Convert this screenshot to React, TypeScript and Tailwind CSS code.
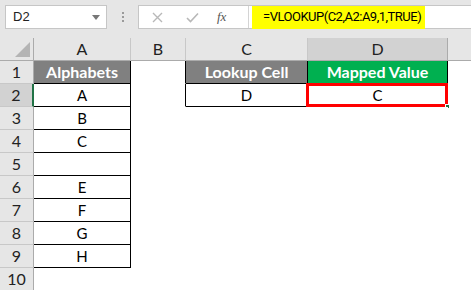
import React from "react";

const font = "font-['Lato','Liberation_Sans',sans-serif]";

// column widths incl. their right border line
const cols = "grid-cols-[34px_97px_55px_122px_140px_1fr]";

type Cell = {
  text?: string;
  bg?: string;
  bold?: boolean;
  right?: boolean; // black right border
  bottom?: boolean; // black bottom border
  selected?: boolean;
};

const rows: Cell[][] = [
  [
    { text: "Alphabets", bg: "bg-[#808080]", bold: true, right: true, bottom: true },
    { right: true },
    { text: "Lookup Cell", bg: "bg-[#808080]", bold: true, right: true, bottom: true },
    { text: "Mapped Value", bg: "bg-[#00b050]", bold: true, right: true, bottom: true },
  ],
  [
    { text: "A", right: true, bottom: true },
    { right: true },
    { text: "D", right: true, bottom: true },
    { text: "C", right: true, bottom: true, selected: true },
  ],
  [{ text: "B", right: true, bottom: true }, {}, {}, {}],
  [{ text: "C", right: true, bottom: true }, {}, {}, {}],
  [{ text: "", right: true, bottom: true }, {}, {}, {}],
  [{ text: "E", right: true, bottom: true }, {}, {}, {}],
  [{ text: "F", right: true, bottom: true }, {}, {}, {}],
  [{ text: "G", right: true, bottom: true }, {}, {}, {}],
  [{ text: "H", right: true, bottom: true }, {}, {}, {}],
  [{}, {}, {}, {}],
];

function Toolbar() {
  return (
    <div className="h-[38px] bg-[#e6e6e6] flex items-start pt-[5px] pl-[5px]">
      {/* name box */}
      <div className="w-[102px] h-[24px] bg-white border border-[#c6c6c6] flex items-center justify-between pl-[7px] pr-[6px]">
        <span className="text-[13px] text-[#222] font-['Liberation_Sans',sans-serif]">D2</span>
        <svg width="8" height="5" viewBox="0 0 8 5">
          <path d="M0 0 L8 0 L4 5 Z" fill="#777" />
        </svg>
      </div>
      {/* dots */}
      <div className="w-[31px] h-[24px] flex flex-col items-center justify-center gap-[2px]">
        <span className="w-[2px] h-[2px] bg-[#9a9a9a]" />
        <span className="w-[2px] h-[2px] bg-[#9a9a9a]" />
        <span className="w-[2px] h-[2px] bg-[#9a9a9a]" />
      </div>
      {/* formula bar */}
      <div className="flex-1 h-[24px] bg-white border border-[#c6c6c6] border-r-0 flex items-center">
        <div className="w-[110px] h-full flex items-center border-r border-[#d4d4d4]">
          <svg className="ml-[13px]" width="11" height="11" viewBox="0 0 11 11">
            <path d="M1 1 L10 10 M10 1 L1 10" stroke="#b8b8b8" strokeWidth="1.4" />
          </svg>
          <svg className="ml-[23px]" width="13" height="11" viewBox="0 0 13 11">
            <path d="M1 6 L4.5 9.5 L12 1.5" stroke="#b8b8b8" strokeWidth="1.6" fill="none" />
          </svg>
          <span className="ml-[18px] text-[13px] italic text-[#555] font-['Liberation_Serif',serif]">fx</span>
        </div>
        <div className="ml-[3px] h-[23px] bg-[#ffff00] flex items-center pl-[11px] pr-[9px] w-[173px]">
          <span className="text-[13px] text-black font-['Roboto',sans-serif] tracking-[-0.5px] whitespace-nowrap">
            =VLOOKUP(C2,A2:A9,1,TRUE)
          </span>
        </div>
      </div>
    </div>
  );
}

export default function App() {
  return (
    <div className={`w-[471px] h-[290px] overflow-hidden bg-white ${font}`}>
      <Toolbar />
      <div className={`grid ${cols}`}>
        {/* header row */}
        <div className="h-[23px] bg-[#e6e6e6] border-r border-b border-[#ababab] flex items-end justify-end pr-[3px] pb-[3px]">
          <svg width="15" height="15" viewBox="0 0 15 15">
            <path d="M15 0 L15 15 L0 15 Z" fill="#b4b4b4" />
          </svg>
        </div>
        {["A", "B", "C", "D", ""].map((c, i) => (
          <div
            key={i}
            className={`h-[23px] border-b border-[#ababab] flex items-center justify-center text-[16px] text-[#222] ${
              c === "D" ? "bg-[#d2d2d2] border-r border-r-[#ababab]" : "bg-[#e6e6e6] border-r border-r-[#c8c8c8]"
            } ${c === "" ? "border-r-0" : ""}`}
          >
            {c}
          </div>
        ))}

        {rows.map((r, ri) => (
          <React.Fragment key={ri}>
            <div
              className={`h-[23px] border-r flex items-center justify-center text-[16px] text-[#222] ${
                ri === 1 ? "bg-[#d2d2d2] border-r-[#217346] border-r-2" : "bg-[#e6e6e6] border-r-[#ababab]"
              } border-b border-b-[#c8c8c8]`}
            >
              {ri + 1}
            </div>
            {r.map((cell, ci) => (
              <div
                key={ci}
                className={`relative h-[23px] flex items-center justify-center ${
                  cell.bg ?? "bg-white"
                } ${cell.bold ? "font-bold text-white text-[16px]" : "text-black text-[15px]"} border-r border-b ${
                  cell.right ? "border-r-black" : "border-r-transparent"
                } ${cell.bottom ? "border-b-black" : "border-b-transparent"}`}
              >
                {cell.text}
                {cell.selected && (
                  <>
                    <div className="absolute -left-[2px] -top-[1px] -right-[1px] -bottom-[1px] border-[3px] border-[#ff0000]" />
                    <div className="absolute -right-[3px] -bottom-[3px] w-[5px] h-[5px] bg-[#217346] border border-white" />
                  </>
                )}
              </div>
            ))}
            <div className="h-[23px] bg-white" />
          </React.Fragment>
        ))}
      </div>
    </div>
  );
}
